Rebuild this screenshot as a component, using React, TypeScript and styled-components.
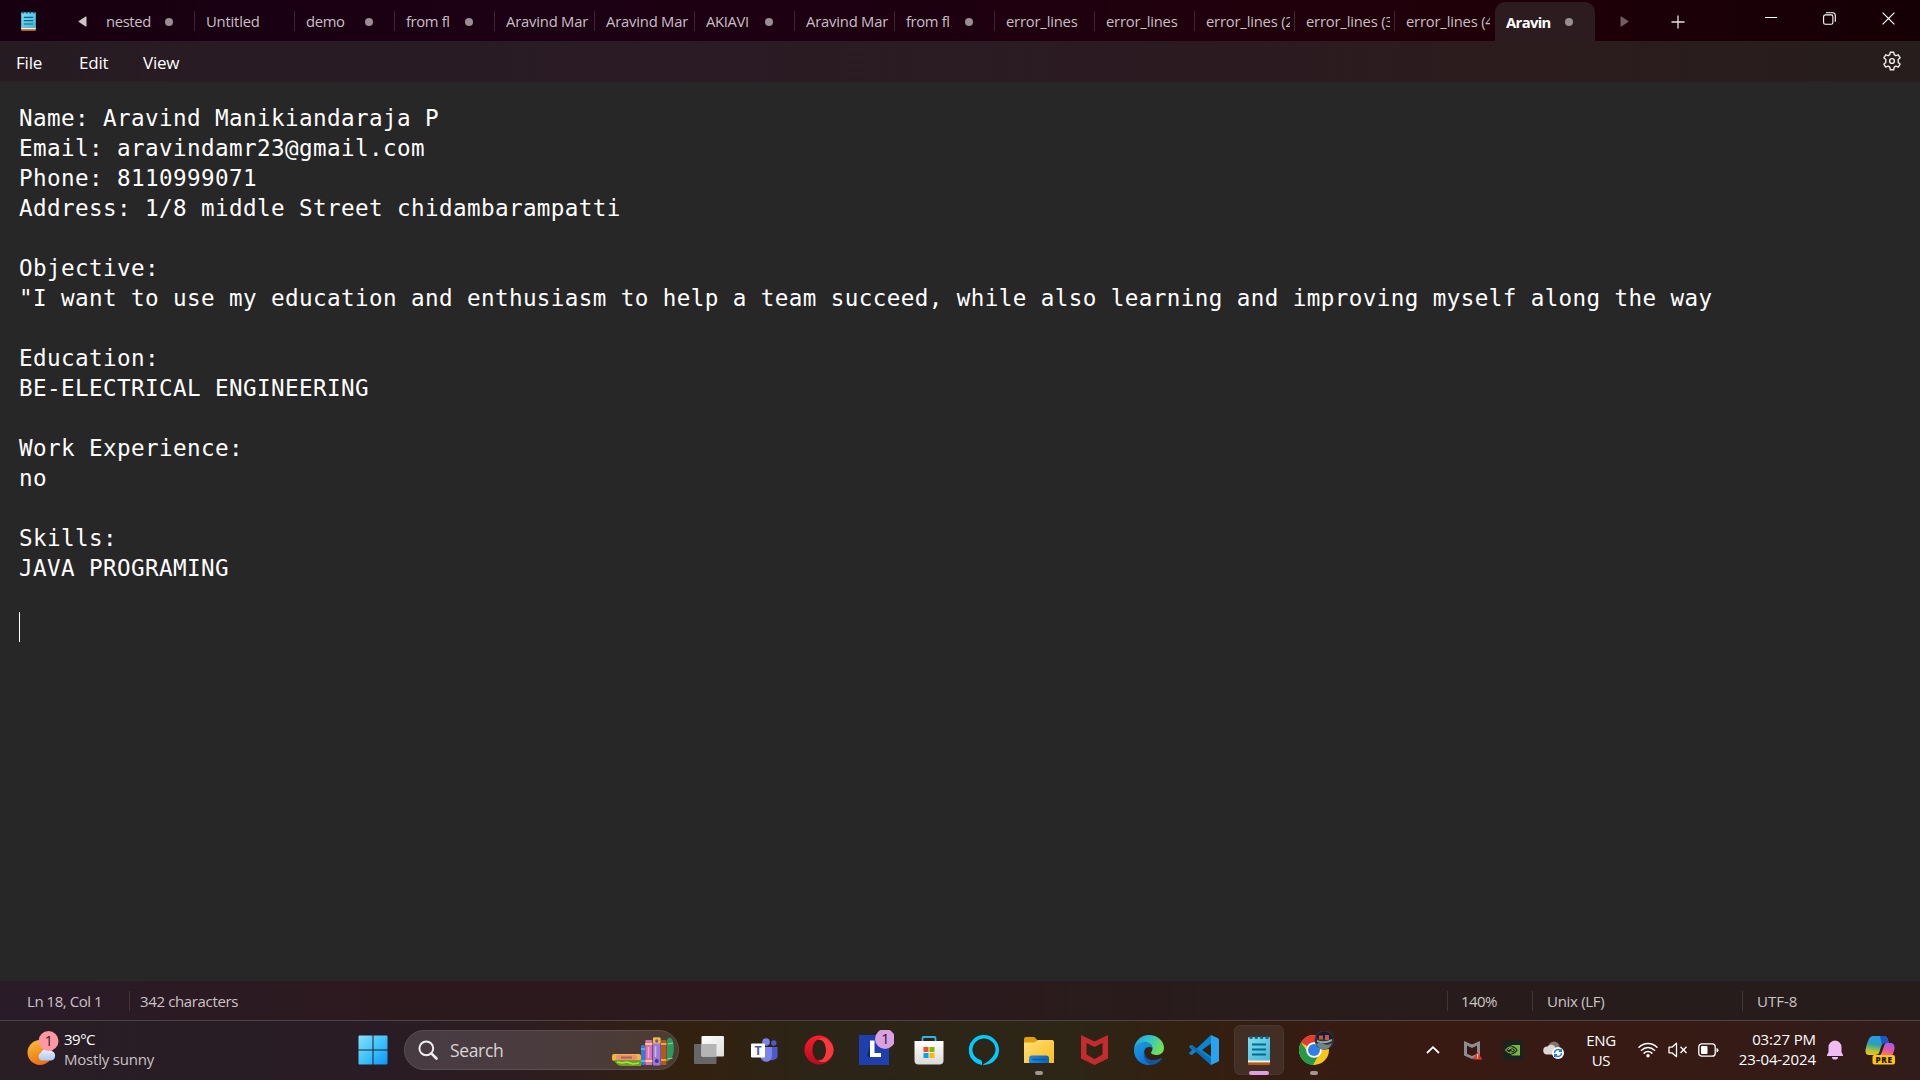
import React from "react";
import styled, { createGlobalStyle } from "styled-components";

const GlobalStyle = createGlobalStyle`
  * { box-sizing: border-box; }
  body { margin: 0; background: #272727; font-family: "Open Sans", "Noto Sans", sans-serif; }
  svg { display: block; flex: none; }
`;

const Screen = styled.div`
  width: 1920px;
  height: 1080px;
  display: flex;
  flex-direction: column;
  overflow: hidden;
`;

/* ---------- title bar ---------- */
const TitleBar = styled.header`
  height: 41px;
  flex: none;
  display: flex;
  background: linear-gradient(90deg, #170010 0%, #1c0014 25%, #1d0010 48%, #20000b 66%, #1f0008 80%, #150005 100%);
`;
const AppBadge = styled.div`
  width: 57px;
  padding: 11px 0 0 21px;
`;
const ScrollArrow = styled.div<{ $w: number; $dim?: boolean }>`
  width: ${(p) => p.$w}px;
  display: flex;
  justify-content: center;
  align-items: center;
  padding-top: 2px;
  opacity: ${(p) => (p.$dim ? 0.55 : 1)};
`;
const Tab = styled.div<{ $active?: boolean; $divider: boolean }>`
  width: 100px;
  height: ${(p) => (p.$active ? 39 : 41)}px;
  margin-top: ${(p) => (p.$active ? 2 : 0)}px;
  padding: 0 0 0 11px;
  display: flex;
  align-items: center;
  border-radius: ${(p) => (p.$active ? "10px 10px 0 0" : "0")};
  background: ${(p) =>
    p.$active
      ? "#2c1c1f"
      : p.$divider
        ? "linear-gradient(#3c2433, #3c2433) 100% 11px / 1px 20px no-repeat"
        : "none"};
  color: ${(p) => (p.$active ? "#fff" : "#c9bfc5")};
  font-weight: ${(p) => (p.$active ? 700 : 400)};
`;
const TabLabel = styled.span<{ $short: boolean; $bold?: boolean }>`
  width: ${(p) => (p.$short ? 45 : 84)}px;
  overflow: hidden;
  white-space: nowrap;
  font-size: 14.8px;
  line-height: 22px;
  letter-spacing: ${(p) => (p.$bold ? -0.65 : p.$short ? -0.36 : -0.2)}px;
`;
const Dot = styled.i<{ $active?: boolean }>`
  width: 8px;
  height: 8px;
  margin: ${(p) => (p.$active ? 0 : 2)}px 0 0 14px;
  border-radius: 50%;
  background: #998d94;
`;
const NewTab = styled.div`
  width: 50px;
  display: flex;
  justify-content: center;
  padding-top: 15px;
`;
const WindowControls = styled.div`
  margin-left: auto;
  display: flex;
  padding-right: 2px;
`;
const Control = styled.div`
  width: 59px;
  height: 36px;
  display: flex;
  align-items: center;
  justify-content: center;
`;

/* ---------- menu ---------- */
const MenuBar = styled.nav`
  height: 41px;
  flex: none;
  display: flex;
  align-items: center;
  padding: 0 18px 0 16px;
  color: #fff;
  font-size: 17px;
  background: linear-gradient(90deg, #271b22 0%, #2a1b24 35%, #2b1a20 64%, #2c1c1d 80%, #261d1c 100%);
  border-bottom: 1px solid #2b1f26;
`;
const MenuItem = styled.span<{ $w: number }>`
  width: ${(p) => p.$w}px;
  padding-top: 3px;
  letter-spacing: -0.2px;
  line-height: 24px;
`;
const Gear = styled.div`
  margin-left: auto;
`;

/* ---------- editor ---------- */
const Editor = styled.main`
  height: 899px;
  flex: none;
  padding: 20px 18px 0 19px;
  background: #272727;
  color: #fff;
  font-family: "DejaVu Sans Mono", "Liberation Mono", monospace;
  font-size: 22.6px;
  letter-spacing: 0.394px;
`;
const Line = styled.div`
  height: 30px;
  line-height: 32px;
  white-space: pre;
`;
const Caret = styled.div`
  width: 1px;
  height: 30px;
  background: #fff;
`;

/* ---------- status bar ---------- */
const StatusBar = styled.footer`
  height: 40px;
  flex: none;
  display: flex;
  align-items: center;
  background: linear-gradient(90deg, #2a1b29 0%, #2b1a22 10%, #2c191d 25%, #2c191d 45%, #281c1c 65%, #261c1b 100%);
  border-top: 1px solid #281d24;
  border-bottom: 1px solid #504346;
`;
const StatusCell = styled.div<{ $w: number; $pad: number; $rule?: boolean; $ls?: number }>`
  width: ${(p) => p.$w}px;
  height: 20px;
  padding-left: ${(p) => p.$pad}px;
  border-left: ${(p) => (p.$rule ? "1px solid #43353a" : "0")};
  font-size: 15px;
  line-height: 21px;
  letter-spacing: ${(p) => p.$ls ?? -0.3}px;
  white-space: nowrap;
  color: #cbc4c6;
`;
const Grow = styled.div`
  flex: 1;
`;

/* ---------- taskbar ---------- */
const Taskbar = styled.div`
  height: 59px;
  flex: none;
  display: flex;
  align-items: center;
  padding-bottom: 1px;
  background: linear-gradient(90deg, #281e24 0%, #291c25 17%, #2c1c21 27%, #33210f 36%, #2c2416 42%, #2d2516 56%, #33200f 62%, #351c13 67%, #381a13 74%, #371a14 87%, #301c1a 100%);
`;
const Weather = styled.div`
  width: 345px;
  padding: 0 0 3px 27px;
  display: flex;
  align-items: center;
`;
const WeatherText = styled.div`
  margin-left: 5px;
  color: #c9c2c6;
  font-size: 15px;
  line-height: 20px;
  letter-spacing: -0.2px;
`;
const Temp = styled.div`
  color: #fff;
  letter-spacing: -0.5px;
`;
const Slot = styled.div<{ $w?: number; $mark?: "open" | "active" }>`
  width: ${(p) => p.$w ?? 55}px;
  height: 50px;
  display: flex;
  align-items: center;
  justify-content: center;
  position: relative;
  ${(p) =>
    p.$mark &&
    `&::after {
      content: "";
      position: absolute;
      bottom: 0;
      left: 50%;
      transform: translateX(-50%);
      height: 4px;
      border-radius: 2px;
      width: ${p.$mark === "active" ? 20 : 8}px;
      background: ${p.$mark === "active" ? "#dda0e6" : "#a09890"};
    }`}
`;
const Highlight = styled.div`
  width: 50px;
  height: 50px;
  display: flex;
  align-items: center;
  justify-content: center;
  border-radius: 6px;
  background: #432e25;
  border: 1px solid #4b372f;
`;
const SearchBox = styled.div`
  width: 275px;
  height: 40px;
  margin: 0 2.5px 0 4px;
  padding-left: 13px;
  display: flex;
  align-items: center;
  border-radius: 20px;
  overflow: hidden;
  background: linear-gradient(90deg, #483c43, #4a3b3e 50%, #4d3c30);
  border: 1px solid #5c4f53;
  color: #d9d4d6;
  font-size: 17.5px;
`;
const SearchText = styled.span`
  margin: 0 auto 0 12px;
  letter-spacing: -0.35px;
`;
const Books = styled.div`
  margin: 4px 4px 0 0;
`;
const Tray = styled.div`
  margin-left: auto;
  padding-right: 12px;
  display: flex;
  align-items: center;
  color: #fff;
`;
const Lang = styled.div`
  width: 56px;
  padding-bottom: 1px;
  text-align: center;
  font-size: 15px;
  line-height: 20px;
  letter-spacing: -0.4px;
`;
const Quick = styled.div`
  display: flex;
  padding-left: 4px;
`;
const Clock = styled.div`
  width: 93px;
  padding-bottom: 3px;
  display: flex;
  flex-direction: column;
  align-items: flex-end;
  white-space: nowrap;
  font-size: 15px;
  line-height: 20px;
  letter-spacing: -0.1px;
`;

const NotepadIcon = ({ w, h }: { w: number; h: number }) => (
  <svg width={w} height={h} viewBox="0 0 22 30">
    <defs>
      <linearGradient id="np" x1="0" y1="0" x2="1" y2="1">
        <stop offset="0" stopColor="#7fdcf2" />
        <stop offset="1" stopColor="#44b5d6" />
      </linearGradient>
    </defs>
    <rect x="0" y="26" width="22" height="4" rx="1" fill="#b9590f" />
    <rect x="0" y="24" width="22" height="3.4" fill="#f4efe8" />
    <rect x="0" y="2" width="22" height="23.6" rx="1" fill="url(#np)" />
    {[3, 8.3, 13.6, 19].map((x) => (
      <circle key={x} cx={x} cy="2.4" r="1.7" fill="#0d637d" />
    ))}
    <path d="M4 9.5h14M4 14.5h14M4 19.5h14" stroke="#08688a" strokeWidth="1.8" />
  </svg>
);

const GearIcon = () => (
  <svg width="20" height="20" viewBox="0 0 20 20" fill="none" stroke="#f1eaed" strokeWidth="1.4" strokeLinejoin="round">
    <path d="M8.3 1.2h3.4l.5 2.5 1.7 1 2.4-.9 1.8 3-1.9 1.7v2.9l1.9 1.7-1.8 3-2.4-.9-1.7 1-.5 2.6H8.3l-.5-2.6-1.7-1-2.4.9-1.8-3 1.9-1.7V8.5l-1.900-1.700 1.800-3 2.400.9 1.700-1z" />
    <circle cx="10" cy="10" r="2.4" />
  </svg>
);

const WeatherIcon = () => (
  <svg width="32" height="36" viewBox="0 0 32 36">
    <defs>
      <linearGradient id="sun" x1="0.2" y1="0" x2="0.6" y2="1">
        <stop offset="0" stopColor="#f4be35" />
        <stop offset="1" stopColor="#ee6a12" />
      </linearGradient>
      <linearGradient id="cloud" x1="0" y1="0" x2="0" y2="1">
        <stop offset="0" stopColor="#eef5ff" />
        <stop offset="1" stopColor="#a9c6f2" />
      </linearGradient>
    </defs>
    <circle cx="13" cy="21.5" r="12.5" fill="url(#sun)" />
    <path d="M14 29.5a4.500 4.500 0 0 1 0-8 6 6 0 0 1 10-1.500 4.800 4.800 0 0 1 0 9.500z" fill="url(#cloud)" />
    <circle cx="21.5" cy="10" r="10" fill="#fd98a3" />
    <text x="21.8" y="15" fontSize="14" fill="#2a1a1e" textAnchor="middle">1</text>
  </svg>
);

const StartIcon = () => (
  <svg width="30" height="30" viewBox="0 0 30 30">
    <defs>
      <linearGradient id="win" gradientUnits="userSpaceOnUse" x1="0" y1="0" x2="30" y2="30">
        <stop offset="0" stopColor="#8be0fd" />
        <stop offset="0.5" stopColor="#3fc4fb" />
        <stop offset="1" stopColor="#0a92f8" />
      </linearGradient>
    </defs>
    <path fill="url(#win)" d="M1.500.5h13v14h-14v-13a1 1 0 0 1 1-1zM15.500.5h13a1 1 0 0 1 1 1v13h-14zM.5 15.500h14v14h-13a1 1 0 0 1-1-1zM15.500 15.500h14v13a1 1 0 0 1-1 1h-13z" />
  </svg>
);

const BooksIcon = () => (
  <svg width="62" height="30" viewBox="0 0 62 30">
    <rect x="0" y="17" width="29" height="7" rx="2" fill="#f0b93c" />
    <rect x="4" y="18" width="21" height="5" rx="2" fill="#f08c78" />
    <rect x="9" y="19.5" width="11" height="2" fill="#a9625c" />
    <path d="M2 23h27v6H9q-5-1-7-6z" fill="#6aa51d" />
    <path d="M5 25l5 1 5-1 6 2 6-1" stroke="#b6d94d" strokeWidth="1.5" fill="none" />
    <rect x="29" y="8" width="4" height="20" rx="1" fill="#2d7ce0" />
    <path d="M29 12h4M29 24h4" stroke="#9fd0ff" />
    <rect x="33.3" y="3" width="7" height="25" rx="1" fill="#df6fb0" />
    <path d="M33.3 7h7M33.3 24h7" stroke="#f8d27a" strokeWidth="2" />
    <path d="M36.5 10v11" stroke="#f3a9d2" strokeWidth="1.5" />
    <rect x="41" y="0.5" width="7.5" height="28" rx="1" fill="#9a7be0" />
    <rect x="41" y="0.5" width="7.5" height="6" rx="1" fill="#f2c033" />
    <circle cx="44.8" cy="4" r="1.7" fill="#7554bd" />
    <path d="M43.5 9v11" stroke="#c9b4f5" strokeWidth="1.5" />
    <circle cx="44.8" cy="24" r="2" fill="#4b2f93" />
    <rect x="49" y="3" width="5.5" height="25" rx="1" fill="#b4581f" />
    <path d="M49 7h5.500M49 23h5.500" stroke="#f0a33f" strokeWidth="2" />
    <path d="M55 3q2-4 5-1 2 3 1.800 12-1 8-6.800 11z" fill="#2c9a5e" />
    <path d="M56 7l5-1M55.500 22l5-1" stroke="#8fd6a0" strokeWidth="1.2" />
  </svg>
);

const TaskViewIcon = () => (
  <svg width="30" height="28" viewBox="0 0 30 28">
    <defs>
      <linearGradient id="tvw" x1="0" y1="0" x2="1" y2="1">
        <stop offset="0" stopColor="#fff" />
        <stop offset="1" stopColor="#dedede" />
      </linearGradient>
    </defs>
    <rect x="0" y="8" width="22.5" height="20" rx="1" fill="#676767" />
    <rect x="7.5" y="0" width="22.5" height="20.5" rx="1" fill="url(#tvw)" />
    <rect x="7.5" y="8" width="15" height="12.5" fill="#b5b5b5" />
  </svg>
);

const TeamsIcon = () => (
  <svg width="27" height="25" viewBox="0 0 27 25">
    <circle cx="15" cy="4" r="3.8" fill="#7b83eb" />
    <circle cx="22.8" cy="5" r="2.7" fill="#5059c9" />
    <path d="M17 9h9.500v7a5 5 0 0 1-9.500 3z" fill="#5059c9" />
    <path d="M9 9h12v9a5.800 5.800 0 0 1-11.500 1z" fill="#7b83eb" />
    <rect x="0" y="5.5" width="14" height="14" rx="1" fill="#fff" />
    <text x="7" y="17" fontSize="12.5" fontWeight="700" fill="#5558af" textAnchor="middle">T</text>
  </svg>
);

const OperaIcon = () => (
  <svg width="30" height="30" viewBox="0 0 30 30">
    <defs>
      <linearGradient id="op" x1="0" y1="0" x2="0" y2="1">
        <stop offset="0" stopColor="#ff1b2d" />
        <stop offset="1" stopColor="#b60a1c" />
      </linearGradient>
    </defs>
    <path fillRule="evenodd" fill="url(#op)" d="M15 .5C7 .5 .5 7 .5 15S7 29.500 15 29.500 29.500 23 29.500 15 23 .5 15 .5zM15.500 4.500c4 0 6.500 5 6.500 10.500s-2.500 10.500-6.500 10.500S8.500 21 8.500 15s3-10.500 7-10.500z" />
    <path d="M14 4.800c2-2 5-2.300 8-1 4.500 2.500 7.500 6.500 7.500 11.200s-3 9-7.500 11.500c-3 1-6 .7-8-1.300 5 1 8-4 8-10.200s-3-11-8-10.200z" fill="#f8383f" />
  </svg>
);

const LIcon = () => (
  <svg width="40" height="40" viewBox="0 0 40 40">
    <rect x="5" y="5" width="30" height="30" fill="#1f3fae" />
    <path d="M13 26l4 2V12z" fill="#0d2b57" />
    <path d="M16 10.500h4.500v12.500h6.500v4H16z" fill="#fff" />
    <circle cx="31" cy="9" r="10" fill="#d9a0e2" />
    <text x="31.5" y="14" fontSize="14.5" fill="#2a1a2e" textAnchor="middle">1</text>
  </svg>
);

const StoreIcon = () => (
  <svg width="30" height="30" viewBox="0 0 30 30">
    <defs>
      <linearGradient id="st" x1="0" y1="0" x2="0" y2="1">
        <stop offset="0" stopColor="#fff" />
        <stop offset="1" stopColor="#d9d9d9" />
      </linearGradient>
    </defs>
    <path d="M8.500 6V3a1 1 0 0 1 1-1h11a1 1 0 0 1 1 1v3" fill="none" stroke="#2fb6e8" strokeWidth="1.8" />
    <path d="M.5 6h29v19.500a4 4 0 0 1-4 4h-21a4 4 0 0 1-4-4z" fill="url(#st)" />
    <rect x="9.5" y="12" width="5" height="5" fill="#f25022" />
    <rect x="15.5" y="12" width="5" height="5" fill="#7fba00" />
    <rect x="9.5" y="18" width="5" height="5" fill="#00a4ef" />
    <rect x="15.5" y="18" width="5" height="5" fill="#ffb900" />
  </svg>
);

const AlexaIcon = () => (
  <svg width="30" height="30" viewBox="0 0 30 30">
    <path fill="#00caff" fillRule="evenodd" d="M15 0a15 15 0 0 0-2 29.900V27c0-1-.4-1.600-1.500-2C7 23.500 3.500 19.500 3.500 15a11.500 11.500 0 0 1 23 0c0 5.500-6 11-13 14.900Q14 30 15 30A15 15 0 0 0 15 0z" />
  </svg>
);

const ExplorerIcon = () => (
  <svg width="30" height="27" viewBox="0 0 30 27">
    <defs>
      <linearGradient id="fd" x1="0" y1="0" x2="1" y2="1">
        <stop offset="0" stopColor="#ffe07a" />
        <stop offset="1" stopColor="#fdbb1c" />
      </linearGradient>
      <linearGradient id="fb" x1="0" y1="0" x2="1" y2="0">
        <stop offset="0" stopColor="#1c8be0" />
        <stop offset="1" stopColor="#0a63b8" />
      </linearGradient>
    </defs>
    <path d="M0 2a2 2 0 0 1 2-2h7.500q1 0 1.700.8L14 4v4H0z" fill="#e1a008" />
    <path d="M0 5.500h10.500L14 3h14a2 2 0 0 1 2 2v21H0z" fill="url(#fd)" />
    <path d="M5 26v-4.500a3 3 0 0 1 3-3h14a3 3 0 0 1 3 3V26z" fill="url(#fb)" />
    <path d="M8.500 22.500h13" stroke="#08508f" strokeWidth="1.3" />
  </svg>
);

const McAfeeIcon = () => (
  <svg width="27" height="30" viewBox="0 0 27 30">
    <path fillRule="evenodd" fill="#c42b2f" d="M0 0l13.500 6.500L27 0v23.500L13.500 30 0 23.500zM5.500 8v11.500l8 4.500 8-4.500V8l-8 4z" />
  </svg>
);

const EdgeIcon = () => (
  <svg width="30" height="30" viewBox="0 0 30 30">
    <defs>
      <linearGradient id="e1" x1="0" y1="0" x2="1" y2="0.4">
        <stop offset="0" stopColor="#1f9fe0" />
        <stop offset="0.5" stopColor="#2fc3cf" />
        <stop offset="1" stopColor="#6fe05a" />
      </linearGradient>
      <linearGradient id="e2" x1="0" y1="0" x2="0.6" y2="1">
        <stop offset="0" stopColor="#1b9de2" />
        <stop offset="1" stopColor="#0f6fd0" />
      </linearGradient>
    </defs>
    <path d="M0 14C.8 6 7 0 15 0c8.500 0 15 6 15 13 0 4.500-3.500 7-7.500 7-3.500 0-5.500-1.200-5.500-2.300 0-.9 1.500-1.700 1.500-4.200C18.500 10 15 7.500 11 7.500 5.500 7.500 1.500 10.500 0 14z" fill="url(#e1)" />
    <path d="M0 14c1-4 5-6.500 10.500-6.500 5 0 8 3 8 6-1-1.500-2.500-1.800-4-1.500-4.500 1-5.500 5.500-3.500 9.500 1.800 4 5.500 6 9.500 5.800-2 2-4.500 2.700-7 2.600C6 29.600-.7 23 0 14z" fill="url(#e2)" />
    <path d="M10.500 16c-.8 6 4.500 9.500 9.500 9 3 0 5.500-1.200 7.300-2.200.7-.3 1 .2.700.8-2 3.400-6 6.100-10 6.300-6-1-10-8-7.500-13.900z" fill="#1256a0" />
  </svg>
);

const VSCodeIcon = () => (
  <svg width="30" height="30" viewBox="0 0 30 30">
    <path d="M22 0L7.500 13.500 2.800 10 .4 11a.8.8 0 0 0-.2 1.100L3 15 .2 17.900a.8.8 0 0 0 .2 1.100l2.400 1 4.700-3.500L22 30V21.500L13 15l9-6.500z" fill="#0c85cf" />
    <path d="M.4 11l2.400-1L22 24v6z" fill="#0b6fb8" />
    <path d="M22 0l7 3.200q1 .5 1 1.500v20.600q0 1-1 1.500L22 30z" fill="#2aa3ef" />
  </svg>
);

const ChromeIcon = () => (
  <svg width="42" height="38" viewBox="-2 0 42 38">
    <circle cx="19" cy="19" r="15" fill="#f8c518" />
    <path d="M19 19L6 11.500A15 15 0 0 1 32 11.500H19z" fill="#e33b2e" />
    <path d="M6 11.500A15 15 0 0 0 18 34l6.500-11.500L19 19l-5.500 3z" fill="#249a49" />
    <circle cx="19" cy="19" r="7.800" fill="#fff" />
    <circle cx="19" cy="19" r="6" fill="#2f7de9" />
    <circle cx="29.5" cy="9" r="9.800" fill="#30303c" />
    <path d="M21 6q3-5 8-5.500t9 6l-2 2-5-2-5 2z" fill="#161b35" />
    <path d="M24 4.500h4v4h-4zM30 4h4v5h-4z" fill="#c05a3a" />
    <path d="M22 9q7 3 15-1v2q-7 4-15 1z" fill="#93a5a8" />
    <path d="M21 13q4-2 8 0t8-1q-2 6-8 6.500-5 0-8-5.500z" fill="#6f8583" />
  </svg>
);

const CopilotIcon = () => (
  <svg width="32" height="30" viewBox="0 0 32 30">
    <defs>
      <linearGradient id="c1" x1="0.5" y1="0" x2="0.3" y2="1">
        <stop offset="0" stopColor="#1f9bf0" />
        <stop offset="0.45" stopColor="#2e9fb4" />
        <stop offset="0.75" stopColor="#9fc43d" />
        <stop offset="1" stopColor="#f2c21c" />
      </linearGradient>
      <linearGradient id="c2" x1="0.7" y1="0" x2="0.3" y2="1">
        <stop offset="0" stopColor="#a55be8" />
        <stop offset="0.5" stopColor="#e455a8" />
        <stop offset="1" stopColor="#fb7f5c" />
      </linearGradient>
    </defs>
    <path d="M8 1h11q3 0 4 4l.8 3H20q-3 0-4 4l-2 6q-1 2-4 2H4q-4 0-3.500-5Q2 7 4.500 3 6 1 8 1z" fill="url(#c1)" />
    <path d="M15 1h4q3 0 4 4l.8 3H20q-2 0-3 2z" fill="#1b57c9" />
    <path d="M21 8h5q4 .5 3.500 6L28 19q-1 2-3 2H14q2-1 3-4l2-6q.7-2.500 2-3z" fill="url(#c2)" />
    <rect x="7.5" y="20" width="22.5" height="9.5" rx="2" fill="#ffc60a" />
    <text x="19" y="27.7" fontSize="8.2" fontWeight="800" fill="#1c1408" textAnchor="middle" letterSpacing="0.6">PRE</text>
  </svg>
);

const tabs: { label: string; dot?: boolean; active?: boolean }[] = [
  { label: "nested", dot: true },
  { label: "Untitled" },
  { label: "demo", dot: true },
  { label: "from fl", dot: true },
  { label: "Aravind Mar" },
  { label: "Aravind Mar" },
  { label: "AKIAVI", dot: true },
  { label: "Aravind Mar" },
  { label: "from fl", dot: true },
  { label: "error_lines" },
  { label: "error_lines" },
  { label: "error_lines (2" },
  { label: "error_lines (3" },
  { label: "error_lines (4" },
  { label: "Aravin", dot: true, active: true },
];

const lines = [
  "Name: Aravind Manikiandaraja P",
  "Email: aravindamr23@gmail.com",
  "Phone: 8110999071",
  "Address: 1/8 middle Street chidambarampatti",
  "",
  "Objective:",
  '"I want to use my education and enthusiasm to help a team succeed, while also learning and improving myself along the way',
  "",
  "Education:",
  "BE-ELECTRICAL ENGINEERING",
  "",
  "Work Experience:",
  "no",
  "",
  "Skills:",
  "JAVA PROGRAMING",
  "",
];

export default function App() {
  return (
    <Screen>
      <GlobalStyle />
      <TitleBar>
        <AppBadge>
          <NotepadIcon w={15} h={20} />
        </AppBadge>
        <ScrollArrow $w={38}>
          <svg width="9" height="11" viewBox="0 0 9 11" style={{ marginLeft: 12 }}>
            <path d="M8.500 1v9a.5.5 0 0 1-.8.400L.8 6a.6.6 0 0 1 0-1L7.700.6a.5.5 0 0 1 .8.400z" fill="#cfc3ca" />
          </svg>
        </ScrollArrow>
        {tabs.map((t, i) => (
          <Tab key={i} $active={t.active} $divider={i < 13}>
            <TabLabel $short={!!t.dot} $bold={t.active}>{t.label}</TabLabel>
            {t.dot && <Dot $active={t.active} />}
          </Tab>
        ))}
        <ScrollArrow $w={58} $dim>
          <svg width="9" height="11" viewBox="0 0 9 11">
            <path d="M.5 1v9a.5.5 0 0 0 .8.400L8.200 6a.6.6 0 0 0 0-1L1.300.6a.5.5 0 0 0-.8.400z" fill="#b8a9b0" />
          </svg>
        </ScrollArrow>
        <NewTab>
          <svg width="14" height="14" viewBox="0 0 14 14">
            <path d="M7 .5v13M.5 7h13" stroke="#e8e2e4" strokeWidth="1.3" />
          </svg>
        </NewTab>
        <WindowControls>
          <Control>
            <svg width="12" height="12" viewBox="0 0 12 12"><path d="M0 5.500h12" stroke="#fff" /></svg>
          </Control>
          <Control>
            <svg width="13" height="13" viewBox="0 0 13 13" fill="none" stroke="#fff" strokeWidth="1.1">
              <rect x="0.6" y="2.9" width="9.3" height="9.4" rx="1.8" />
              <path d="M2.900.7h6.600q2.800 0 2.800 2.800v6.300" />
            </svg>
          </Control>
          <Control>
            <svg width="13" height="13" viewBox="0 0 13 13"><path d="M.6.6l11.800 11.800M12.400.6L.6 12.400" stroke="#fff" strokeWidth="1.2" /></svg>
          </Control>
        </WindowControls>
      </TitleBar>

      <MenuBar>
        <MenuItem $w={63}>File</MenuItem>
        <MenuItem $w={64}>Edit</MenuItem>
        <MenuItem $w={60}>View</MenuItem>
        <Gear><GearIcon /></Gear>
      </MenuBar>

      <Editor>
        {lines.map((l, i) => (
          <Line key={i}>{l}</Line>
        ))}
        <Caret />
      </Editor>

      <StatusBar>
        <StatusCell $w={129} $pad={27} $ls={-0.45}>Ln 18, Col 1</StatusCell>
        <StatusCell $w={200} $pad={10} $rule $ls={-0.36}>342 characters</StatusCell>
        <Grow />
        <StatusCell $w={85} $pad={13} $rule $ls={-0.6}>140%</StatusCell>
        <StatusCell $w={210} $pad={14} $rule>Unix (LF)</StatusCell>
        <StatusCell $w={178} $pad={14} $rule $ls={0}>UTF-8</StatusCell>
      </StatusBar>

      <Taskbar>
        <Weather>
          <WeatherIcon />
          <WeatherText>
            <Temp>39°C</Temp>
            <div>Mostly sunny</div>
          </WeatherText>
        </Weather>
        <Slot><StartIcon /></Slot>
        <SearchBox>
          <svg width="20" height="20" viewBox="0 0 20 20" fill="none" stroke="#f0edee" strokeWidth="2">
            <circle cx="8.3" cy="8.3" r="6.9" />
            <path d="M13.300 13.300l5.200 5.200" strokeWidth="2.6" strokeLinecap="round" />
          </svg>
          <SearchText>Search</SearchText>
          <Books><BooksIcon /></Books>
        </SearchBox>
        <Slot><TaskViewIcon /></Slot>
        <Slot><TeamsIcon /></Slot>
        <Slot><OperaIcon /></Slot>
        <Slot><LIcon /></Slot>
        <Slot><StoreIcon /></Slot>
        <Slot><AlexaIcon /></Slot>
        <Slot $mark="open"><ExplorerIcon /></Slot>
        <Slot><McAfeeIcon /></Slot>
        <Slot><EdgeIcon /></Slot>
        <Slot><VSCodeIcon /></Slot>
        <Slot $mark="active">
          <Highlight><NotepadIcon w={22} h={30} /></Highlight>
        </Slot>
        <Slot $mark="open"><ChromeIcon /></Slot>

        <Tray>
          <Slot $w={40}>
            <svg width="14" height="8" viewBox="0 0 14 8"><path d="M1 7l6-5.800L13 7" fill="none" stroke="#fff" strokeWidth="1.8" /></svg>
          </Slot>
          <Slot $w={40}>
            <svg width="20" height="20" viewBox="0 0 20 20">
              <path fillRule="evenodd" fill="#8d8c8e" d="M1 1l8 3.500L17 1v14.500L9 19l-8-3.500zM4 5.500v8.300L9 16l5-2.200V5.500L9 8z" />
              <path d="M14.500 11.500L19.300 19.500H10z" fill="#e5332e" />
              <path d="M14.600 14v2.800M14.600 17.600v1" stroke="#fff" strokeWidth="1.1" />
            </svg>
          </Slot>
          <Slot $w={40}>
            <svg width="20" height="20" viewBox="0 0 20 20">
              <rect width="20" height="20" fill="#1d211f" />
              <path d="M8.500 5H17v10.500H8.500z" fill="#76b83f" />
              <path d="M2.500 10Q8 3.500 13.500 10 8 16.500 2.500 10zM5 10q3.500-4 7 .5-3 3.500-5 1" fill="none" stroke="#76b83f" strokeWidth="1.1" />
              <path d="M8.500 6.500q3.500.3 5.500 3.500-2 3.500-5.500 4M8.500 8.500q2 .3 3 1.800-1 1.700-3 1.700" fill="none" stroke="#1d211f" strokeWidth="1.1" />
            </svg>
          </Slot>
          <Slot $w={40}>
            <svg width="21" height="18" viewBox="0 0 21 18">
              <circle cx="11" cy="6" r="5.6" fill="#85736d" />
              <path d="M4 13.500a4 4 0 0 1 .5-8 5 5 0 0 1 7-.5l4.500 8.500z" fill="#ddd8d6" />
              <circle cx="15" cy="12" r="6" fill="#fff" />
              <path d="M11.500 12a3.600 3.600 0 0 1 6.500-2M18.500 12a3.600 3.600 0 0 1-6.500 2M18.300 7.800v2.500h-2.500M11.700 16.200v-2.500h2.500" fill="none" stroke="#1d78c8" strokeWidth="1.3" />
            </svg>
          </Slot>
          <Lang>
            <div>ENG</div>
            <div>US</div>
          </Lang>
          <Quick>
            <Slot $w={30}>
              <svg width="20" height="16" viewBox="0 0 20 16" fill="none" stroke="#fff" strokeWidth="1.5" strokeLinecap="round">
                <path d="M1 5.200a12.600 12.600 0 0 1 18 0M3.500 8.200a9 9 0 0 1 13 0M6.100 11.100a5.500 5.500 0 0 1 7.800 0" />
                <circle cx="10" cy="13.8" r="1.7" fill="#fff" stroke="none" />
              </svg>
            </Slot>
            <Slot $w={30}>
              <svg width="20" height="16" viewBox="0 0 20 16" fill="none" stroke="#fff" strokeWidth="1.3" strokeLinejoin="round">
                <path d="M1 5.200h3L8.500 1.300v13.400L4 10.800H1zM12.500 4.800l6 6.200M18.500 4.800l-6 6.200" />
              </svg>
            </Slot>
            <Slot $w={30}>
              <svg width="21" height="14" viewBox="0 0 21 14">
                <rect x="0.8" y="0.8" width="16.4" height="12.4" rx="3" fill="none" stroke="#fff" strokeWidth="1.3" />
                <rect x="3" y="3" width="6.5" height="8" rx="1" fill="#fff" />
                <path d="M18.500 5v4.500q2-.5 2-2.200T18.500 5z" fill="#fff" />
              </svg>
            </Slot>
          </Quick>
          <Clock>
            <div>03:27 PM</div>
            <div>23-04-2024</div>
          </Clock>
          <Slot $w={38}>
            <svg width="18" height="20" viewBox="0 0 18 20">
              <path d="M9 .5a6.500 6.500 0 0 1 6.500 6.500v5l1.500 3v1H1v-1l1.500-3V7A6.500 6.500 0 0 1 9 .5z" fill="#efbdf4" />
              <path d="M6 17h6a3 2.600 0 0 1-6 0z" fill="#efbdf4" />
            </svg>
          </Slot>
          <Slot $w={54}><CopilotIcon /></Slot>
        </Tray>
      </Taskbar>
    </Screen>
  );
}
